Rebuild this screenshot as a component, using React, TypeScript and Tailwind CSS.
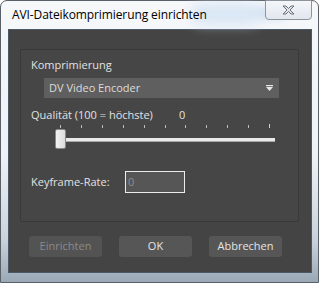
import React from 'react';

const ui = { fontFamily: '"Open Sans", "Noto Sans", "Liberation Sans", sans-serif' };

function CloseGlyph() {
  return (
    <svg width="13" height="10" viewBox="0 0 13 10">
      <path d="M1 1 L4 1 L6.5 3.5 L9 1 L12 1 L8 5 L12 9 L9 9 L6.5 6.5 L4 9 L1 9 L5 5 Z" fill="#e4e6e9" stroke="#6b7079" strokeWidth="1" strokeLinejoin="round" />
    </svg>
  );
}

function DropArrow() {
  return (
    <svg width="7" height="6" viewBox="0 0 7 6">
      <rect x="0" y="0" width="7" height="1.2" fill="#e8e8e8" />
      <path d="M0 2 L7 2 L3.5 6 Z" fill="#e8e8e8" />
    </svg>
  );
}

export default function App() {
  const ticks = Array.from({ length: 11 }, (_, i) => i);

  return (
    <div className="w-[319px] h-[283px] overflow-hidden" style={ui}>
      <div className="relative w-[319px] h-[283px] rounded-t-[7px] border border-[#5a6068] bg-[linear-gradient(to_bottom,#f6f8fa_0%,#eef2f6_55%,#c9d2db_85%,#9aa8b6_100%)] flex flex-col">
        {/* blurred glass spots */}
        <div className="absolute left-[190px] top-[2px] w-[70px] h-[22px] rounded-full bg-[#cfe0f3] blur-[6px] opacity-70" />
        <div className="absolute left-[255px] top-[6px] w-[30px] h-[12px] rounded-full bg-[#c2d6ee] blur-[5px] opacity-70" />

        {/* title bar */}
        <div className="relative h-[28px] flex items-start">
          <span className="pl-[11px] pt-[6px] text-[12px] leading-[16px] text-black tracking-[-0.1px]">
            AVI-Dateikomprimierung einrichten
          </span>
          <div className="absolute left-[264px] top-[-1px] w-[47px] h-[20px] rounded-b-[4px] border border-[#8c949e] bg-[linear-gradient(to_bottom,#f4f6f9,#e2e7ee)] flex items-center justify-center">
            <CloseGlyph />
          </div>
        </div>

        {/* client area */}
        <div className="ml-[7px] mr-[6px] h-[244px] border border-[#4d5866] bg-[#444444] flex flex-col">
          {/* group box */}
          <div className="mt-[19px] ml-[11px] mr-[12px] h-[173px] rounded-[2px] border border-[#393939] bg-[#464646] flex flex-col text-[11px] text-[#e2e2e2]">
            <div className="pl-[10px] mt-[7px] leading-[15px]">Komprimierung</div>

            <div className="ml-[23px] mt-[6px] w-[235px] h-[20px] bg-[#5f5f5f] flex items-center pl-[5px] pr-[6px]">
              <span className="flex-1 text-[#dcdcdc]">DV Video Encoder</span>
              <DropArrow />
            </div>

            <div className="pl-[10px] mt-[9px] leading-[15px] flex">
              <span className="w-[148px]">Qualität (100 = höchste)</span>
              <span>0</span>
            </div>

            {/* slider */}
            <div className="relative ml-[34px] mt-[1px] w-[225px] h-[26px]">
              {ticks.map((i) => (
                <div
                  key={i}
                  className={i === 10 ? 'absolute top-[1px] w-px h-[4px] bg-[#d0d0d0]' : 'absolute top-[2px] w-px h-[3px] bg-[#bdbdbd]'}
                  style={{ left: 5 + i * 20.9 }}
                />
              ))}
              <div className="absolute left-[8px] top-[15px] w-[212px] h-[4px] bg-[#e9e9e9] border-b border-[#a9a9a9]" />
              <div className="absolute left-0 top-[6px] w-[11px] h-[20px] rounded-[2px] border border-[#8a8a8a] bg-[linear-gradient(to_right,#f2f2f2,#dcdcdc)]" />
            </div>

            <div className="flex items-center mt-[22px]">
              <span className="pl-[10px] w-[104px]">Keyframe-Rate:</span>
              <div className="w-[60px] h-[22px] border border-[#ececec] bg-[#565656] flex items-center pl-[2px]">
                <span className="text-[#8d8d95]">0</span>
              </div>
            </div>
          </div>

          {/* buttons */}
          <div className="mt-[14px] ml-[20px] flex gap-[17px] text-[11px]">
            <div className="w-[73px] h-[21px] rounded-[3px] bg-[#535353] flex items-center justify-center text-[#8a8a8a]">Einrichten</div>
            <div className="w-[73px] h-[21px] rounded-[3px] bg-[#565656] flex items-center justify-center text-[#e4e4e4]">OK</div>
            <div className="w-[73px] h-[21px] rounded-[3px] bg-[#565656] flex items-center justify-center text-[#e4e4e4]">Abbrechen</div>
          </div>
        </div>
      </div>
    </div>
  );
}
